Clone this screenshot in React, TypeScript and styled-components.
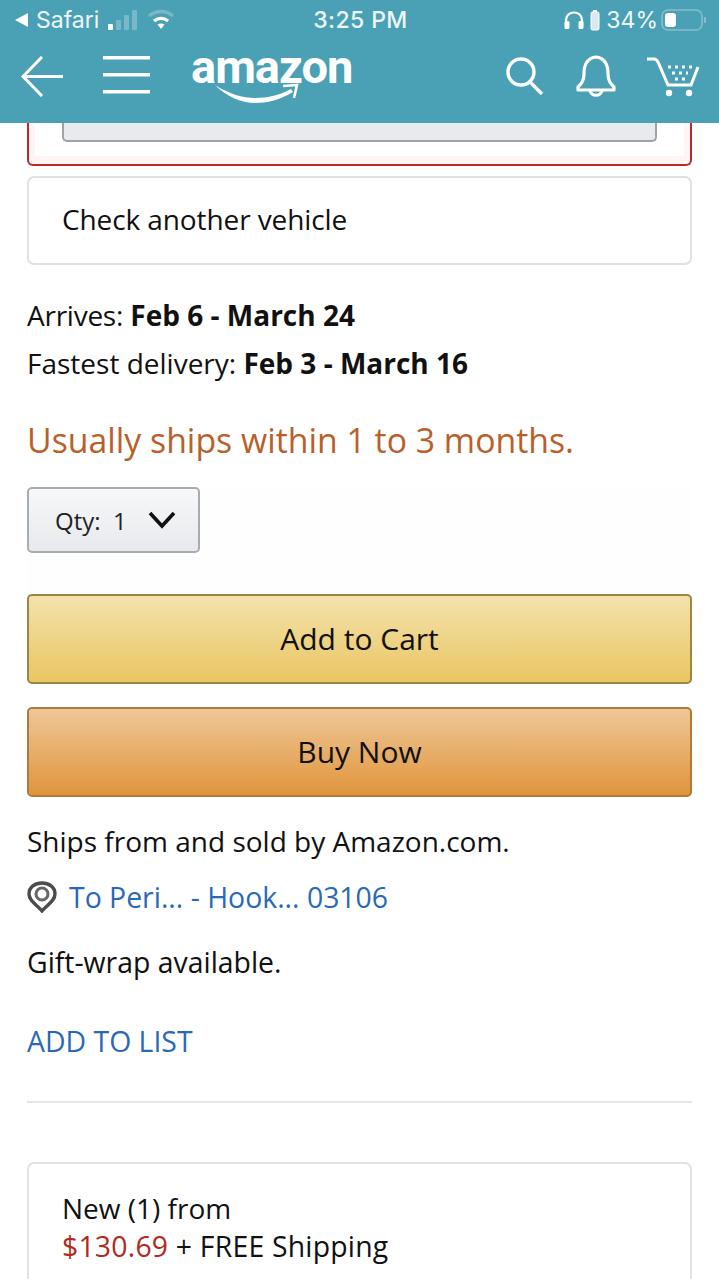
import React from "react";
import styled, { createGlobalStyle } from "styled-components";

const Global = createGlobalStyle`
  html, body { margin: 0; padding: 0; background: #fff; }
  body { font-family: "Open Sans", "Noto Sans", "Liberation Sans", sans-serif; color: #111; }
`;

const Page = styled.div`
  width: 719px;
  height: 1279px;
  overflow: hidden;
`;

const Header = styled.header`
  height: 123px;
  background: #4aa0b5;
  color: #fff;
`;

const StatusBar = styled.div`
  height: 40px;
  display: grid;
  grid-template-columns: 1fr auto 1fr;
  align-items: center;
  padding: 0 12px 0 14px;
  font-family: Inter, "Open Sans", sans-serif;
  font-size: 23px;
  color: #eef7f9;
`;

const StatusLeft = styled.div`
  display: flex;
  align-items: center;
  gap: 6px;
`;

const StatusRight = styled.div`
  display: flex;
  align-items: center;
  justify-content: flex-end;
  gap: 3px;
`;

const Clock = styled.span`
  font-weight: 500;
  letter-spacing: 0.4px;
`;

const NavBar = styled.nav`
  height: 83px;
  display: flex;
  align-items: flex-start;
  padding: 10px 0 0 21px;
`;

const NavIcon = styled.svg<{ $left?: number; $top?: number; $right?: number }>`
  display: block;
  flex: none;
  margin-left: ${(p) => p.$left ?? 0}px;
  margin-top: ${(p) => p.$top ?? 0}px;
  margin-right: ${(p) => p.$right ?? 0}px;
`;

const Logo = styled.div`
  position: relative;
  width: 164px;
  height: 56px;
  margin-left: 40px;
  margin-top: -3px;
  flex: none;
`;

const LogoWord = styled.span`
  display: block;
  font-family: Roboto, "Open Sans", sans-serif;
  font-weight: 700;
  font-size: 47px;
  line-height: 40px;
  letter-spacing: -1px;
`;

const Smile = styled.svg`
  position: absolute;
  left: 22px;
  top: 36px;
`;

const Spacer = styled.div`
  flex: 1;
`;

const Content = styled.main`
  padding: 0 27px;
`;

const AlertCard = styled.div`
  height: 43px;
  box-sizing: border-box;
  border: 2px solid #c0272d;
  border-top: 0;
  border-radius: 0 0 6px 6px;
  background: #fff;
  box-shadow: inset 6px 0 0 #fdf6f5, inset -6px 0 0 #fdf6f5, inset 0 -8px 0 #fdf6f5;
  padding: 0 33px;
`;

const GreyButton = styled.div`
  height: 19px;
  box-sizing: border-box;
  background: #e9eaed;
  border: 2px solid #a0a2a6;
  border-top: 0;
  border-radius: 0 0 5px 5px;
`;

const OutlineCard = styled.div<{ $top: number }>`
  margin-top: ${(p) => p.$top}px;
  border: 2px solid #dfe1e3;
  border-radius: 7px;
  padding: 0 33px;
  font-size: 28px;
`;

const VehicleCard = styled(OutlineCard)`
  height: 89px;
  box-sizing: border-box;
  display: flex;
  align-items: center;
  padding-bottom: 4px;
  letter-spacing: -0.1px;
`;

const OfferCard = styled(OutlineCard)`
  padding-top: 25px;
  height: 200px;
`;

const Line = styled.div<{ $top: number }>`
  margin-top: ${(p) => p.$top}px;
  font-size: 28px;
  line-height: 38px;
  white-space: nowrap;
  b { font-weight: 700; }
`;

const TightLabel = styled.span`
  letter-spacing: -0.25px;
`;

const ShipNote = styled(Line)`
  font-size: 33.8px;
  line-height: 44px;
  color: #b9602a;
`;

const GiftLine = styled(Line)`
  font-size: 28.4px;
`;

const QtyRow = styled.div`
  margin-top: 25px;
  height: 107px;
  background: #fefefe;
`;

const QtyButton = styled.div`
  width: 173px;
  height: 66px;
  box-sizing: border-box;
  display: flex;
  align-items: center;
  padding-left: 26px;
  gap: 21px;
  font-size: 24px;
  color: #222;
  border: 2px solid #a8abb1;
  border-radius: 5px;
  background: linear-gradient(#f7f8fa, #e7e9ec);
`;

const ActionButton = styled.div<{ $from: string; $to: string; $edge: string; $top: number }>`
  margin-top: ${(p) => p.$top}px;
  height: 90px;
  box-sizing: border-box;
  display: flex;
  align-items: center;
  justify-content: center;
  padding-bottom: 2px;
  font-size: 30px;
  color: #111;
  border: 2px solid ${(p) => p.$edge};
  border-radius: 5px;
  background: linear-gradient(${(p) => p.$from}, ${(p) => p.$to});
`;

const LocationRow = styled.div`
  margin-top: 18px;
  display: flex;
  align-items: center;
  gap: 12px;
  height: 38px;
`;

const BlueLink = styled.span`
  font-size: 28.4px;
  line-height: 38px;
  color: #2a69b8;
`;

const ListLink = styled(BlueLink)`
  display: block;
  margin-top: 41px;
`;

const Divider = styled.hr`
  margin: 41px 0 0;
  border: 0;
  border-top: 2px solid #e4e5e6;
`;

const Price = styled.span`
  color: #b12a1c;
`;

const OfferLine = styled.div`
  line-height: 38px;
`;

const PriceLine = styled(OfferLine)`
  font-size: 28.4px;
  letter-spacing: 0.2px;
`;

const BatteryLabel = styled.span`
  margin-left: 3px;
`;

const StatusGlyph = styled.svg<{ $left?: number }>`
  display: block;
  flex: none;
  margin-left: ${(p) => p.$left ?? 0}px;
`;

export default function App() {
  return (
    <Page>
      <Global />
      <Header>
        <StatusBar>
          <StatusLeft>
            <StatusGlyph width="16" height="16" viewBox="0 0 16 16"><path d="M1 8 L14 1 V15 Z" fill="#fff" /></StatusGlyph>
            <span>Safari</span>
            <StatusGlyph width="32" height="22" viewBox="0 0 32 22" $left={2}>
              <rect x="1" y="15" width="5" height="6" rx="1" fill="#fff" />
              <rect x="9" y="11" width="5" height="10" rx="1" fill="#79b8c8" />
              <rect x="17" y="6" width="5" height="15" rx="1" fill="#79b8c8" />
              <rect x="25" y="1" width="5" height="20" rx="1" fill="#79b8c8" />
            </StatusGlyph>
            <StatusGlyph width="28" height="22" viewBox="0 0 28 22" $left={2}>
              <path d="M2 7 C9 1 19 1 26 7" fill="none" stroke="#79b8c8" strokeWidth="3.4" />
              <path d="M7 12 C11 8.5 17 8.5 21 12" fill="none" stroke="#fff" strokeWidth="3.2" />
              <path d="M10.5 15.5 C12.5 14 15.5 14 17.5 15.5 L14 20 Z" fill="#fff" />
            </StatusGlyph>
          </StatusLeft>
          <Clock>3:25 PM</Clock>
          <StatusRight>
            <StatusGlyph width="22" height="22" viewBox="0 0 22 22">
              <path d="M3 17 V11 C3 1 19 1 19 11 V17" fill="none" stroke="#fff" strokeWidth="2.2" />
              <rect x="1.5" y="12" width="5" height="8" rx="1.5" fill="#fff" />
              <rect x="15.5" y="12" width="5" height="8" rx="1.5" fill="#fff" />
            </StatusGlyph>
            <StatusGlyph width="10" height="22" viewBox="0 0 10 22" $left={2}>
              <rect x="3" y="1" width="4" height="3" fill="#fff" />
              <rect x="1" y="3" width="8" height="18" rx="1.5" fill="#d7ebef" stroke="#fff" />
            </StatusGlyph>
            <BatteryLabel>34%</BatteryLabel>
            <StatusGlyph width="46" height="24" viewBox="0 0 46 24">
              <rect x="1" y="2" width="40" height="20" rx="6" fill="none" stroke="#87bfcc" strokeWidth="1.6" />
              <rect x="4" y="5" width="11" height="14" rx="3" fill="#fff" />
              <rect x="43" y="9" width="2" height="6" rx="1" fill="#87bfcc" />
            </StatusGlyph>
          </StatusRight>
        </StatusBar>
        <NavBar>
          <NavIcon width="42" height="41" viewBox="0 0 42 41" fill="none" stroke="#fff" strokeWidth="3" $top={6}>
            <path d="M42 20.5 H2 M21 1 L2 20.5 L21 40" />
          </NavIcon>
          <NavIcon width="48" height="40" viewBox="0 0 48 40" fill="#fff" $left={40} $top={5}>
            <rect x="0" y="1" width="47" height="3.5" />
            <rect x="0" y="18" width="47" height="3.5" />
            <rect x="0" y="35" width="47" height="3.5" />
          </NavIcon>
          <Logo>
            <LogoWord>amazon</LogoWord>
            <Smile width="90" height="22" viewBox="0 0 90 22" fill="none">
              <path d="M2 2 C16 11 30 15 42 15 C55 15 67 12 78 6 L80 9 C67 17 54 20 42 20 C28 20 13 13 2 2 Z" fill="#fff" />
              <path d="M70 3 L84 2 L81 15" stroke="#fff" strokeWidth="2.6" />
            </Smile>
          </Logo>
          <Spacer />
          <NavIcon width="38" height="38" viewBox="0 0 38 38" fill="none" stroke="#fff" strokeWidth="3.4" $top={7}>
            <circle cx="15" cy="15" r="13" />
            <path d="M24 25 L36 37" />
          </NavIcon>
          <NavIcon width="40" height="42" viewBox="0 0 40 42" fill="none" stroke="#fff" strokeWidth="3.2" $left={32} $top={5}>
            <path d="M20 2 C11 3 8 10 8 19 C8 26 5 29 2 32 V35 H38 V32 C35 29 32 26 32 19 C32 10 29 3 20 2 Z" strokeLinejoin="round" />
            <path d="M14 35 C15 42 25 42 26 35" />
          </NavIcon>
          <NavIcon width="54" height="40" viewBox="0 0 54 40" fill="none" $left={30} $top={7} $right={19}>
            <path d="M1 2 H8 C10 2 11 3 12 5 L22 28 H45 L52 10" stroke="#fff" strokeWidth="3" />
            <circle cx="23" cy="36" r="3.2" fill="#fff" />
            <circle cx="43" cy="36" r="3.2" fill="#fff" />
            <path d="M22 10 H46 M26 16 H42 M29 22 H39" stroke="#fff" strokeWidth="3" strokeDasharray="3 4" />
          </NavIcon>
        </NavBar>
      </Header>
      <Content>
        <AlertCard>
          <GreyButton />
        </AlertCard>
        <VehicleCard $top={10}>Check another vehicle</VehicleCard>
        <Line $top={31}><TightLabel>Arrives:</TightLabel> <b>Feb 6 - March 24</b></Line>
        <Line $top={10}>Fastest delivery: <b>Feb 3 - March 16</b></Line>
        <ShipNote $top={36}>Usually ships within 1 to 3 months.</ShipNote>
        <QtyRow>
          <QtyButton>
            <span>Qty:&nbsp; 1</span>
            <svg width="28" height="18" viewBox="0 0 28 18" fill="none" stroke="#111" strokeWidth="3.6"><path d="M2 2 L14 15 L26 2" /></svg>
          </QtyButton>
        </QtyRow>
        <ActionButton $top={0} $from="#f4e2ad" $to="#e9c662" $edge="#9c8646">Add to Cart</ActionButton>
        <ActionButton $top={23} $from="#eec797" $to="#e0953c" $edge="#b4793a">Buy Now</ActionButton>
        <Line $top={25}>Ships from and sold by Amazon.com.</Line>
        <LocationRow>
          <svg width="30" height="32" viewBox="0 0 30 32" fill="none">
            <path d="M15 30 C10 24 2 20 2 13 C2 6 8 2 15 2 C22 2 28 6 28 13 C28 20 20 24 15 30 Z" fill="#fff" stroke="#4c4c4c" strokeWidth="3.4" />
            <circle cx="15" cy="13" r="6" stroke="#666" strokeWidth="3" />
          </svg>
          <BlueLink>To Peri... - Hook... 03106</BlueLink>
        </LocationRow>
        <GiftLine $top={27}>Gift-wrap available.</GiftLine>
        <ListLink>ADD TO LIST</ListLink>
        <Divider />
        <OfferCard $top={59}>
          <OfferLine>New (1) from</OfferLine>
          <PriceLine><Price>$130.69</Price> + FREE Shipping</PriceLine>
        </OfferCard>
      </Content>
    </Page>
  );
}
